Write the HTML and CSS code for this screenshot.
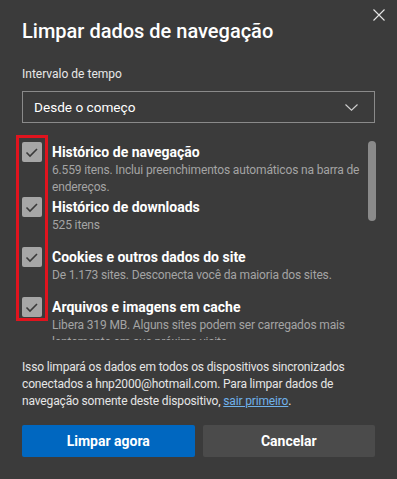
FILE: index.html
```html
<!DOCTYPE html>
<html lang="pt-BR">
<head>
  <title>Limpar dados de navegação</title>
  <meta charset="UTF-8">
  <meta name="viewport" content="width=device-width, initial-scale=1.0">
  <link rel="stylesheet" href="styles.css">
</head>
<body>
  <div class="dialog">
    <div class="dialog-top">
      <h1 class="dialog-title">Limpar dados de navegação</h1>
      <button class="close-btn" aria-label="Fechar">
        <svg width="12" height="12" viewBox="0 0 12 12"><path d="M0.5 0.5 L11.5 11.5 M11.5 0.5 L0.5 11.5" stroke="#e6e6e6" stroke-width="1.1" fill="none"/></svg>
      </button>
    </div>

    <div class="field-label">Intervalo de tempo</div>
    <div class="select-box">
      <span>Desde o começo</span>
      <svg width="13" height="7" viewBox="0 0 13 7"><path d="M0.5 0.5 L6.5 6.2 L12.5 0.5" stroke="#cfcfcf" stroke-width="1.1" fill="none"/></svg>
    </div>

    <div class="list-wrap">
      <div class="list">
        <div class="item">
          <span class="check"><svg width="20" height="20" viewBox="0 0 20 20"><path d="M4.5 10.5 L8 14 L15 7" stroke="#3a3a3a" stroke-width="1.6" fill="none"/></svg></span>
          <div class="item-text">
            <div class="item-title">Histórico de navegação</div>
            <div class="item-desc">6.559 itens. Inclui preenchimentos automáticos na barra de endereços.</div>
          </div>
        </div>
        <div class="item">
          <span class="check"><svg width="20" height="20" viewBox="0 0 20 20"><path d="M4.5 10.5 L8 14 L15 7" stroke="#3a3a3a" stroke-width="1.6" fill="none"/></svg></span>
          <div class="item-text">
            <div class="item-title">Histórico de downloads</div>
            <div class="item-desc">525 itens</div>
          </div>
        </div>
        <div class="item">
          <span class="check"><svg width="20" height="20" viewBox="0 0 20 20"><path d="M4.5 10.5 L8 14 L15 7" stroke="#3a3a3a" stroke-width="1.6" fill="none"/></svg></span>
          <div class="item-text">
            <div class="item-title">Cookies e outros dados do site</div>
            <div class="item-desc">De 1.173 sites. Desconecta você da maioria dos sites.</div>
          </div>
        </div>
        <div class="item">
          <span class="check"><svg width="20" height="20" viewBox="0 0 20 20"><path d="M4.5 10.5 L8 14 L15 7" stroke="#3a3a3a" stroke-width="1.6" fill="none"/></svg></span>
          <div class="item-text">
            <div class="item-title">Arquivos e imagens em cache</div>
            <div class="item-desc">Libera 319 MB. Alguns sites podem ser carregados mais lentamente em sua próxima visita.</div>
          </div>
        </div>
      </div>
      <div class="scroll-track"><div class="scroll-thumb"></div></div>
      <!-- red highlight around the checkboxes -->
      <div class="highlight"></div>
    </div>

    <p class="note">Isso limpará os dados em todos os dispositivos sincronizados conectados a hnp2000@hotmail.com. Para limpar dados de navegação somente deste dispositivo, <a href="#">sair primeiro</a>.</p>

    <div class="actions">
      <button class="btn btn-primary">Limpar agora</button>
      <button class="btn">Cancelar</button>
    </div>
  </div>
</body>
</html>
```

FILE: styles.css
```css
body {
  margin: 0;
  background-color: #3b3b3b;
  color: #ffffff;
  font-family: Roboto, 'Open Sans', Arial, sans-serif;
}
.dialog {
  width: 397px;
  height: 479px;
  box-sizing: border-box;
  padding: 0 22px;
  overflow: hidden;
}
.dialog-top {
  display: flex;
  justify-content: space-between;
  align-items: flex-start;
}
.dialog-title {
  margin: 17px 0 0 0;
  font-size: 20px;
  line-height: 28px;
  font-weight: 500;
}
.close-btn {
  margin: 9px -10px 0 0;
  padding: 0;
  width: 12px;
  height: 12px;
  border: none;
  background: none;
  display: flex;
}
.field-label {
  margin-top: 20px;
  font-size: 12px;
  line-height: 18px;
  color: #e8e8e8;
}
.select-box {
  margin-top: 8px;
  height: 32px;
  box-sizing: border-box;
  border: 1px solid #8a8a8a;
  display: flex;
  align-items: center;
  justify-content: space-between;
  padding: 0 16px 0 11px;
  font-size: 13.6px;
}
.list-wrap {
  position: relative;
  margin-top: 12px;
  display: flex;
  height: 205px;
}
.list {
  flex: 1;
  padding-top: 7px;
  overflow: hidden;
}
.item {
  display: flex;
  gap: 10px;
  min-height: 49px;
  margin-bottom: 1px;
}
.check {
  flex: none;
  width: 20px;
  height: 20px;
  border-radius: 2px;
  background-color: #a6a6a6;
  display: flex;
}
.item-text {
  flex: 1;
}
.item-title {
  font-size: 14px;
  line-height: 20px;
  font-weight: 700;
}
.item-desc {
  font-size: 12px;
  line-height: 17px;
  letter-spacing: -0.15px;
  color: #a4a4a4;
}
.scroll-track {
  flex: none;
  width: 8px;
  margin-right: -1px;
  padding-top: 6px;
}
.scroll-thumb {
  height: 80px;
  border-radius: 4px;
  background-color: #8a8a8a;
}
.highlight {
  position: absolute;
  left: -6px;
  top: 0;
  width: 26px;
  height: 180px;
  border: 3px solid #e0141e;
}
.note {
  margin: 19px 0 0 0;
  font-size: 12px;
  line-height: 17px;
  letter-spacing: -0.15px;
  color: #e6e6e6;
}
.note a {
  color: #6fb1ea;
}
.actions {
  margin-top: 15px;
  display: flex;
  gap: 8px;
}
.btn {
  flex: 1;
  height: 32px;
  border: none;
  border-radius: 2px;
  background-color: #4b4b4b;
  color: #ffffff;
  font-family: inherit;
  font-size: 14px;
  font-weight: 700;
}
.btn-primary {
  background-color: #0067c0;
}
```
